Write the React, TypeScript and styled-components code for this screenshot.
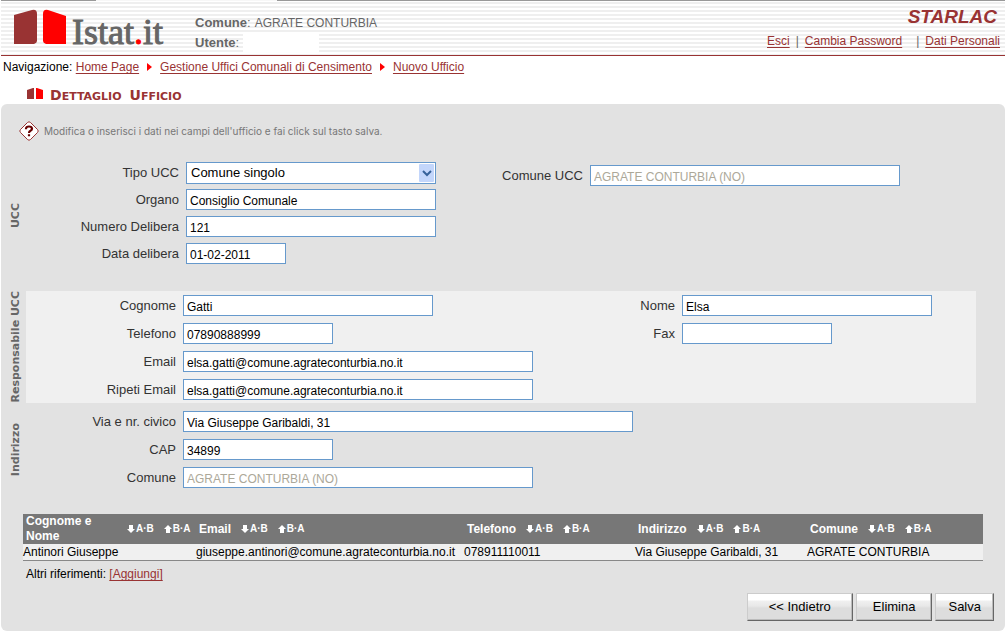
import React from 'react';
import styled, { createGlobalStyle } from 'styled-components';

const Global = createGlobalStyle`
  * { box-sizing: border-box; }
  body { margin: 0; background: #fff; color: #000; font: 12px/16px "Liberation Sans", Arial, sans-serif; }
`;

const Header = styled.header`
  display: flex;
  align-items: flex-start;
  height: 56px;
  margin: 0 2px 0 1px;
  padding: 9px 5px 0 13px;
  border-bottom: 1px solid #933;
  background:
    linear-gradient(90deg, #999 0 95px, #f7f7f7 95px 276px, #999 276px) 0 0 / 100% 1px no-repeat,
    repeating-linear-gradient(#fff 0 2px, #efefef 2px 4px);
`;

const Logo = styled.svg`
  flex: none;
  display: block;
`;

const Account = styled.dl`
  flex: 1;
  margin: 4px 0 0 29px;
  color: #666;
`;

const AccountLine = styled.div`
  display: flex;
  gap: 4px;
  line-height: 20px;
  dt { font-size: 13px; }
  dd { margin: 0; }
`;

const Redacted = styled.dd`
  width: 76px;
  background: #fff;
`;

const HeaderRight = styled.div`
  display: flex;
  flex-direction: column;
  align-items: flex-end;
  gap: 7px;
  margin-top: -1px;
`;

const AppName = styled.div`
  padding-right: 3px;
  color: #933;
  font: italic bold 19px/18px "Liberation Sans", Arial, sans-serif;
`;

const Link = styled.a`
  color: #933;
  text-decoration: underline;
  text-underline-offset: 2px;
`;

const UserLinks = styled.nav`
  display: flex;
  gap: 6px;
  color: #666;
  span { margin-left: 8px; }
`;

const Breadcrumb = styled.nav`
  display: flex;
  align-items: center;
  padding: 3px 3px;
`;

const Arrow = styled.svg`
  margin: 0 8px;
`;

const Title = styled.h1`
  display: flex;
  align-items: flex-end;
  gap: 7px;
  margin: 8px 0 0 27px;
  height: 18px;
  color: #933;
  font: bold 11px/14px "DejaVu Sans", Verdana, sans-serif;
  text-transform: uppercase;
  svg { margin-bottom: 5px; }
`;

const Words = styled.div`
  display: flex;
  gap: 8px;
`;

const Word = styled.span`
  &::first-letter { font-size: 14px; }
`;

const Panel = styled.main`
  margin: 0 2px 0 1px;
  padding: 17px 22px 10px 0;
  border-radius: 6px;
  background: #e2e2e2;
`;

const Hint = styled.p`
  display: flex;
  align-items: center;
  gap: 5px;
  margin: 0 0 0 18px;
  color: #777;
  font: 10px/20px Inter, Verdana, sans-serif;
`;

const Section = styled.fieldset<{ $top?: number }>`
  display: grid;
  grid-template-columns: 25px minmax(0, 1fr);
  min-width: 0;
  margin: ${(p) => p.$top ?? 0}px 0 0;
  padding: 0;
  border: 0;
`;

const Fields = styled.div<{ $light?: boolean; $pad: string }>`
  display: flex;
  justify-content: space-between;
  margin-right: 7px;
  padding: ${(p) => p.$pad};
  background: ${(p) => (p.$light ? '#f0f0f0' : 'transparent')};
`;

const SideLabel = styled.div`
  display: flex;
  align-items: center;
  justify-content: center;
  padding-left: 4px;
  color: #666;
  font: bold 11px/12px "DejaVu Sans", Verdana, sans-serif;
  white-space: nowrap;
  span { writing-mode: vertical-rl; transform: rotate(180deg); }
`;

const Column = styled.div<{ $label: number; $gap?: number; $top?: number }>`
  display: grid;
  grid-template-columns: ${(p) => p.$label}px auto;
  grid-auto-rows: 22px;
  justify-content: start;
  align-content: start;
  align-items: start;
  gap: ${(p) => p.$gap ?? 5}px 7px;
  padding-top: ${(p) => p.$top ?? 0}px;
`;

const Label = styled.label`
  color: #333;
  font-size: 13px;
  line-height: 22px;
  text-align: right;
  white-space: nowrap;
`;

const Input = styled.input<{ $w: number }>`
  width: ${(p) => p.$w}px;
  max-width: 100%;
  height: 21px;
  padding: 2px 3px 0;
  border: 1px solid #69c;
  border-radius: 0;
  background: #fff;
  color: #000;
  font: 12px/16px "Liberation Sans", Arial, sans-serif;
  &:disabled { color: #aca899; }
`;

const SelectBox = styled.div`
  display: grid;
  width: 250px;
  align-items: center;
  > * { grid-area: 1 / 1; }
  svg { justify-self: end; margin-right: 2px; pointer-events: none; }
`;

const Select = styled.select`
  appearance: none;
  width: 100%;
  height: 22px;
  padding: 0 4px;
  border: 1px solid #69c;
  border-radius: 0;
  background: #fff;
  color: #000;
  font: 13px/16px "Liberation Sans", Arial, sans-serif;
`;

const Table = styled.table`
  width: calc(100% - 22px);
  margin: 25px 0 0 22px;
  border-collapse: collapse;
  table-layout: fixed;
  th {
    height: 30px;
    padding: 0 0 0 3px;
    background: #777;
    color: #fff;
    font-size: 12px;
    line-height: 15px;
    text-align: left;
  }
  td {
    padding: 0;
    border-bottom: 1px solid #888;
    background: #f0f0f0;
    white-space: nowrap;
  }
`;

const HeadCell = styled.div`
  display: flex;
  align-items: center;
  gap: 10px;
`;

const HeadName = styled.span<{ $wide?: boolean }>`
  width: ${(p) => (p.$wide ? '91px' : 'auto')};
`;

const Sort = styled.button`
  display: flex;
  align-items: center;
  gap: 1px;
  padding: 0;
  border: 0;
  background: none;
  color: #fff;
  font: bold 10px/12px "Liberation Sans", Arial, sans-serif;
`;

const References = styled.p`
  margin: 5px 0 0 25px;
`;

const Actions = styled.div`
  display: flex;
  justify-content: flex-end;
  gap: 3px;
  margin: 11px -11px 0 0;
`;

const Button = styled.button<{ $pad: number }>`
  height: 28px;
  padding: 0 ${(p) => p.$pad}px;
  border: 1px solid;
  border-color: #ccc #666 #666 #ccc;
  background: linear-gradient(#fff 0 6px, #f0f0f0 7px, #e8e8e8 12px, #ddd 14px);
  box-shadow: inset -1px -1px #bbb;
  color: #000;
  font: 13px/16px "Liberation Sans", Arial, sans-serif;
`;

function SortButtons() {
  return (
    <>
      <Sort type="button">
        <svg width="8" height="8" viewBox="0 0 8 8" fill="#fff" aria-hidden="true"><path d="M2 0h4v4h2L4 8 0 4h2z" /></svg>
        A·B
      </Sort>
      <Sort type="button">
        <svg width="8" height="8" viewBox="0 0 8 8" fill="#fff" aria-hidden="true"><path d="M2 8h4V4h2L4 0 0 4h2z" /></svg>
        B·A
      </Sort>
    </>
  );
}

function Field({ id, label, value, width, disabled }: { id: string; label: string; value: string; width: number; disabled?: boolean }) {
  return (
    <>
      <Label htmlFor={id}>{label}</Label>
      <Input id={id} defaultValue={value} $w={width} disabled={disabled} />
    </>
  );
}

function Chevron() {
  return <Arrow width="5" height="8" viewBox="0 0 5 8" aria-hidden="true"><path d="M0 0l5 4-5 4z" fill="#f00" /></Arrow>;
}

const columns = [
  { name: 'Cognome e Nome', width: 173 },
  { name: 'Email', width: 268 },
  { name: 'Telefono', width: 171 },
  { name: 'Indirizzo', width: 172 },
  { name: 'Comune', width: 176 },
];

export default function App() {
  return (
    <>
      <Global />
      <Header>
        <Logo width="152" height="44" viewBox="0 0 152 44" role="img" aria-label="Istat.it">
          <path d="M0 6L18 1q5-1 5 4v27q0 2-3 3H0z" fill="#933" />
          <path d="M29 5q0-5 5-4l18 6v28H32q-3-1-3-3z" fill="#f00" />
          <text x="58" y="35" fontFamily="Liberation Serif, serif" fontSize="36" fill="#666" stroke="#666">Istat<tspan fill="#f00" stroke="#f00">.</tspan>it</text>
        </Logo>
        <Account>
          <AccountLine><dt><b>Comune</b>:</dt><dd>AGRATE CONTURBIA</dd></AccountLine>
          <AccountLine><dt><b>Utente</b>:</dt><Redacted /></AccountLine>
        </Account>
        <HeaderRight>
          <AppName>STARLAC</AppName>
          <UserLinks>
            <Link href="#esci">Esci</Link>|<Link href="#password">Cambia Password</Link>
            <span>|</span><Link href="#dati">Dati Personali</Link>
          </UserLinks>
        </HeaderRight>
      </Header>
      <Breadcrumb>
        Navigazione:&nbsp;<Link href="#home">Home Page</Link><Chevron />
        <Link href="#uffici">Gestione Uffici Comunali di Censimento</Link><Chevron />
        <Link href="#nuovo">Nuovo Ufficio</Link>
      </Breadcrumb>
      <Title>
        <svg width="16" height="11" viewBox="0 0 16 11" aria-hidden="true">
          <path d="M0 2l6-2h1v11H0z" fill="#933" /><path d="M9 0h1l6 2v9H9z" fill="#f00" />
        </svg>
        <Words><Word>Dettaglio</Word> <Word>Ufficio</Word></Words>
      </Title>
      <Panel>
        <Hint>
          <svg width="20" height="20" viewBox="0 0 20 20" aria-hidden="true">
            <path d="M8.500 1.500q1.500-1.500 3 0l7 7q1.500 1.500 0 3l-7 7q-1.500 1.500-3 0l-7-7q-1.500-1.500 0-3z" fill="#fff" stroke="#933" />
            <path d="M7 8.200V7.500Q7.200 5.500 10 5.500t3 2.200q0 1.300-1.500 2T10 12M10 13.200v2" fill="none" stroke="#600" strokeWidth="2.200" />
          </svg>
          Modifica o inserisci i dati nei campi dell'ufficio e fai click sul tasto salva.
        </Hint>

        <Section>
          <SideLabel><span>UCC</span></SideLabel>
          <Fields $pad="21px 76px 26px 0">
            <Column $label={153}>
              <Label htmlFor="tipo">Tipo UCC</Label>
              <SelectBox>
                <Select id="tipo"><option>Comune singolo</option></Select>
                <svg width="15" height="18" viewBox="0 0 15 18" aria-hidden="true">
                  <rect width="15" height="18" rx="1" fill="#c3d6fb" />
                  <path d="M4 7l4 4 4-4" fill="none" stroke="#36629a" strokeWidth="2" />
                </svg>
              </SelectBox>
              <Field id="organo" label="Organo" value="Consiglio Comunale" width={250} />
              <Field id="delibera" label="Numero Delibera" value="121" width={250} />
              <Field id="data" label="Data delibera" value="01-02-2011" width={100} />
            </Column>
            <Column $label={90} $top={3}>
              <Field id="comuneUcc" label="Comune UCC" value="AGRATE CONTURBIA (NO)" width={310} disabled />
            </Column>
          </Fields>
        </Section>

        <Section>
          <SideLabel><span>Responsabile UCC</span></SideLabel>
          <Fields $light $pad="4px 44px 2px 0">
            <Column $label={150} $gap={6}>
              <Field id="cognome" label="Cognome" value="Gatti" width={250} />
              <Field id="telefono" label="Telefono" value="07890888999" width={150} />
              <Field id="email" label="Email" value="elsa.gatti@comune.agrateconturbia.no.it" width={350} />
              <Field id="email2" label="Ripeti Email" value="elsa.gatti@comune.agrateconturbia.no.it" width={350} />
            </Column>
            <Column $label={40} $gap={6}>
              <Field id="nome" label="Nome" value="Elsa" width={250} />
              <Field id="fax" label="Fax" value="" width={150} />
            </Column>
          </Fields>
        </Section>

        <Section $top={8}>
          <SideLabel><span>Indirizzo</span></SideLabel>
          <Fields $pad="0">
            <Column $label={150} $gap={6}>
              <Field id="via" label="Via e nr. civico" value="Via Giuseppe Garibaldi, 31" width={450} />
              <Field id="cap" label="CAP" value="34899" width={150} />
              <Field id="comune" label="Comune" value="AGRATE CONTURBIA (NO)" width={350} disabled />
            </Column>
          </Fields>
        </Section>

        <Table>
          <colgroup>{columns.map((c) => <col key={c.name} style={{ width: `${(c.width / 960) * 100}%` }} />)}</colgroup>
          <thead>
            <tr>
              {columns.map((c, i) => (
                <th key={c.name} scope="col">
                  <HeadCell><HeadName $wide={i === 0}>{c.name}</HeadName><SortButtons /></HeadCell>
                </th>
              ))}
            </tr>
          </thead>
          <tbody>
            <tr>
              <td>Antinori Giuseppe</td>
              <td>giuseppe.antinori@comune.agrateconturbia.no.it</td>
              <td>078911110011</td>
              <td>Via Giuseppe Garibaldi, 31</td>
              <td>AGRATE CONTURBIA</td>
            </tr>
          </tbody>
        </Table>
        <References>Altri riferimenti: <Link href="#aggiungi">[Aggiungi]</Link></References>
        <Actions>
          <Button type="button" $pad={21}>&lt;&lt; Indietro</Button>
          <Button type="button" $pad={16}>Elimina</Button>
          <Button type="submit" $pad={12}>Salva</Button>
        </Actions>
      </Panel>
    </>
  );
}
